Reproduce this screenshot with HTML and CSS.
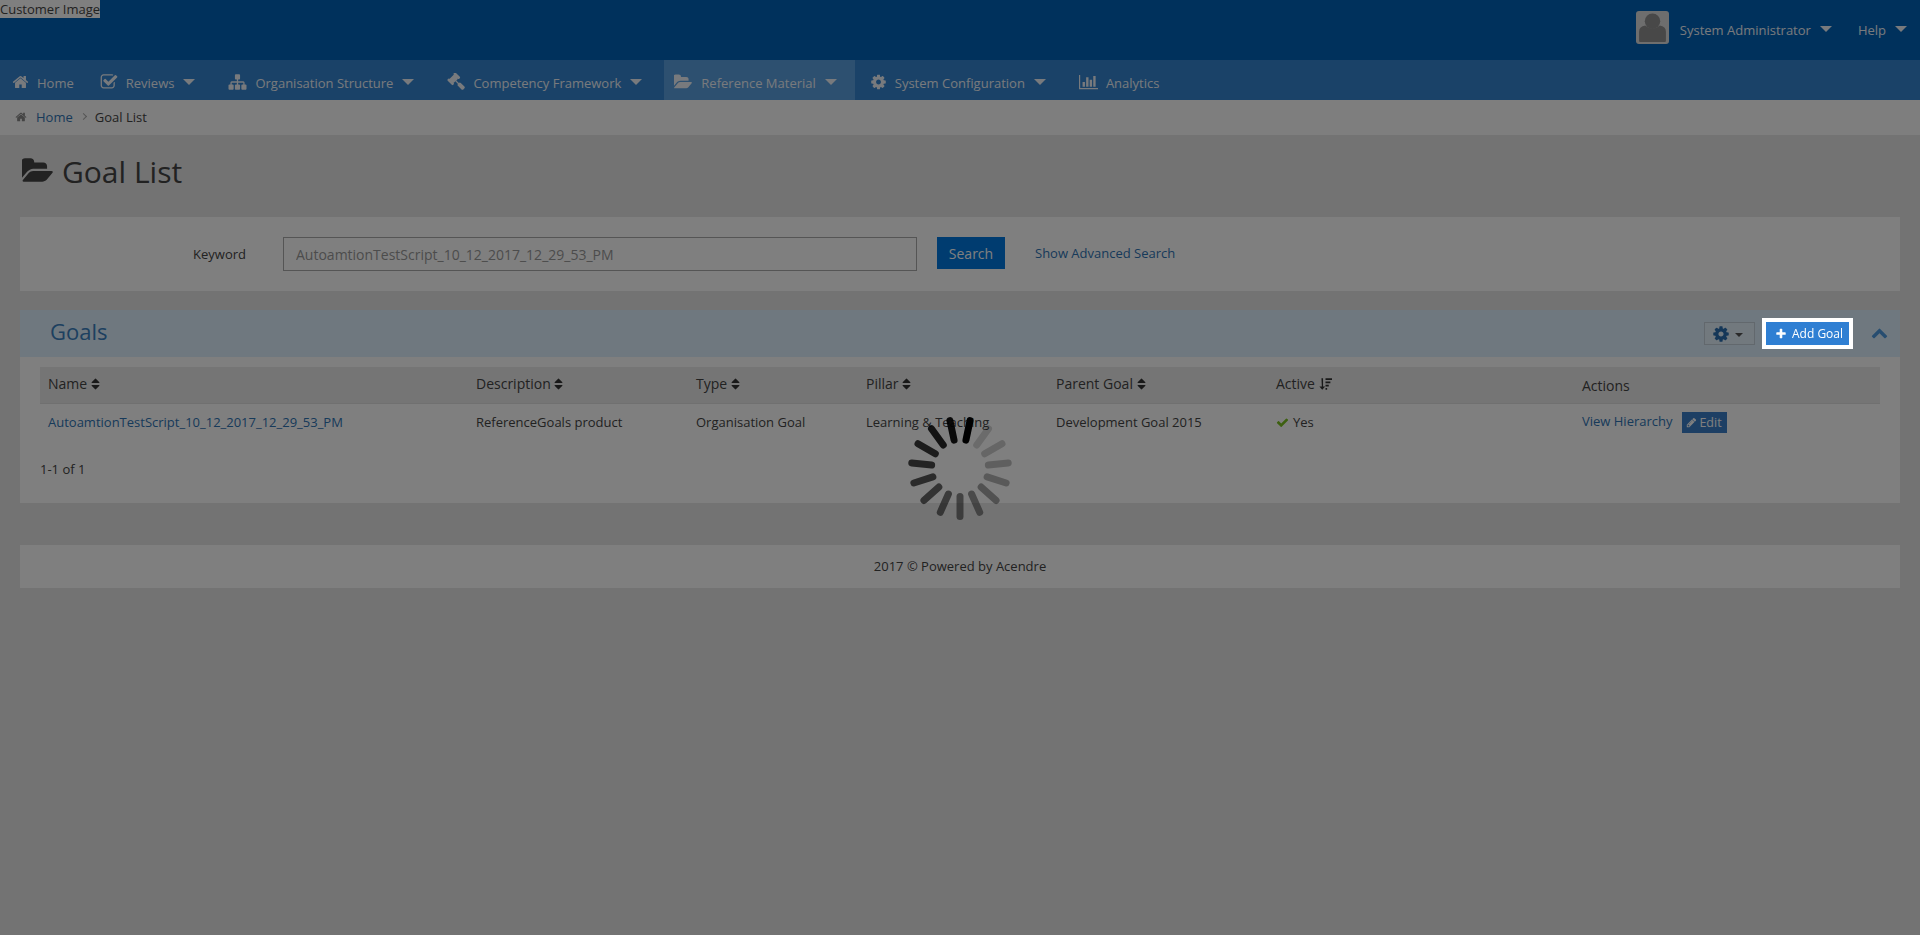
FILE: index.html
```html
<!DOCTYPE html>
<html lang="en">
<head>
  <meta charset="UTF-8" />
  <meta name="viewport" content="width=device-width, initial-scale=1.0" />
  <title>Goal List</title>
  <link rel="stylesheet" href="styles.css">
</head>
<body>
  <svg class="sprite" aria-hidden="true">
    <symbol id="i-home" viewBox="0 0 1792 1792"><path d="M1472 992v480q0 26-19 45t-45 19h-384v-384h-256v384h-384q-26 0-45-19t-19-45v-480q0-1 .5-3t.5-3l575-474 575 474q1 2 1 6zm223-69l-62 74q-8 9-21 11h-3q-13 0-21-7l-692-577-692 577q-12 8-24 7-13-2-21-11l-62-74q-8-10-7-23.5t11-21.5l719-599q32-26 76-26t76 26l244 204v-195q0-14 9-23t23-9h192q14 0 23 9t9 23v408l219 182q10 8 11 21.5t-7 23.5z"/></symbol>
    <symbol id="i-check-square" viewBox="0 0 1792 1792"><path d="M1472 930v318q0 119-84.500 203.500t-203.500 84.500h-832q-119 0-203.500-84.500t-84.500-203.500v-832q0-119 84.500-203.500t203.500-84.500h832q63 0 117 25 15 7 18 23 3 17-9 29l-49 49q-10 10-23 10-3 0-9-2-23-6-45-6h-832q-66 0-113 47t-47 113v832q0 66 47 113t113 47h832q66 0 113-47t47-113v-254q0-13 9-22l64-64q10-10 23-10 6 0 12 3 20 8 20 29zm231-489l-814 814q-24 24-57 24t-57-24l-430-430q-24-24-24-57t24-57l110-110q24-24 57-24t57 24l263 263 647-647q24-24 57-24t57 24l110 110q24 24 24 57t-24 57z"/></symbol>
    <symbol id="i-sitemap" viewBox="0 0 1792 1792"><path d="M1792 1248v320q0 40-28 68t-68 28h-320q-40 0-68-28t-28-68v-320q0-40 28-68t68-28h96v-192h-512v192h96q40 0 68 28t28 68v320q0 40-28 68t-68 28h-320q-40 0-68-28t-28-68v-320q0-40 28-68t68-28h96v-192h-512v192h96q40 0 68 28t28 68v320q0 40-28 68t-68 28h-320q-40 0-68-28t-28-68v-320q0-40 28-68t68-28h96v-192q0-52 38-90t90-38h512v-192h-96q-40 0-68-28t-28-68v-320q0-40 28-68t68-28h320q40 0 68 28t28 68v320q0 40-28 68t-68 28h-96v192h512q52 0 90 38t38 90v192h96q40 0 68 28t28 68z"/></symbol>
    <symbol id="i-gavel" viewBox="0 0 1792 1792"><path d="M1771 1440q0 53-37 90l-107 108q-39 37-91 37-53 0-90-37l-363-364q-38-36-38-90 0-53 43-96l-256-256-126 126q-14 14-34 14t-34-14q2 2 12.500 12t12.500 13 10 11.500 10 13.500 6 13.500 5.500 16.500 1.500 18q0 38-28 68-3 3-16.500 18t-19 20.500-18.500 16.500-22 15.500-22 9-26 4.500q-40 0-68-28l-408-408q-28-28-28-68 0-13 4.500-26t9-22 15.500-22 16.500-18.500 20.500-19 18-16.500q30-28 68-28 10 0 18 1.500t16.500 5.500 13.500 6 13.500 10 11.500 10 13 12.500 12 12.500q-14-14-14-34t14-34l348-348q14-14 34-14t34 14q-2-2-12.500-12t-12.500-13-10-11.500-10-13.500-6-13.500-5.500-16.500-1.500-18q0-38 28-68 3-3 16.500-18t19-20.500 18.500-16.500 22-15.500 22-9 26-4.500q40 0 68 28l408 408q28 28 28 68 0 13-4.500 26t-9 22-15.500 22-16.500 18.500-20.500 19-18 16.500q-30 28-68 28-10 0-18-1.500t-16.500-5.500-13.500-6-13.500-10-11.500-10-13-12.500-12-12.500q14 14 14 34t-14 34l-126 126 256 256q43-43 96-43 52 0 91 37l363 363q37 39 37 91z"/></symbol>
    <symbol id="i-folder" viewBox="0 0 1920 1792"><path d="M1815 952q0 31-31 66l-336 396q-43 51-120.500 86.500t-143.500 35.500h-1088q-34 0-60.500-13t-26.500-43q0-31 31-66l336-396q43-51 120.500-86.500t143.500-35.500h1088q34 0 60.500 13t26.500 43zm-343-344v160h-832q-94 0-197 47.500t-164 119.500l-337 396-5 6q0-4-.5-12.500t-.5-12.500v-960q0-92 66-158t158-66h320q92 0 158 66t66 158v32h544q92 0 158 66t66 158z"/></symbol>
    <symbol id="i-cog" viewBox="0 0 1792 1792"><path d="M1152 896q0-106-75-181t-181-75-181 75-75 181 75 181 181 75 181-75 75-181zm512-109v222q0 12-8 23t-20 13l-185 28q-19 54-39 91 35 50 107 138 10 12 10 25t-9 23q-27 37-99 108t-94 71q-12 0-26-9l-138-108q-44 23-91 38-16 136-29 186-7 28-36 28h-222q-14 0-24.500-8.500t-11.500-21.500l-28-184q-49-16-90-37l-141 107q-10 9-25 9-14 0-25-11-126-114-165-168-7-10-7-23 0-12 8-23 15-21 51-66.500t54-70.500q-27-50-41-99l-183-27q-13-2-21-12.500t-8-23.500v-222q0-12 8-23t19-13l186-28q14-46 39-92-40-57-107-138-10-12-10-24 0-10 9-23 26-36 98.500-107.500t94.500-71.500q13 0 26 10l138 107q44-23 91-38 16-136 29-186 7-28 36-28h222q14 0 24.500 8.500t11.500 21.500l28 184q49 16 90 37l142-107q9-9 24-9 13 0 25 10 129 119 165 170 7 8 7 22 0 12-8 23-15 21-51 66.500t-54 70.500q26 50 41 98l183 28q13 2 21 12.500t8 23.500z"/></symbol>
    <symbol id="i-chart" viewBox="0 0 2048 1792"><path d="M640 896v512h-256v-512h256zm384-512v1024h-256v-1024h256zm1024 1152v128h-2048v-1536h128v1408h1920zm-640-896v768h-256v-768h256zm384-384v1152h-256v-1152h256z"/></symbol>
    <symbol id="i-sort" viewBox="320 128 1152 1536"><path d="M1408 1088q0 26-19 45l-448 448q-19 19-45 19t-45-19l-448-448q-19-19-19-45t19-45 45-19h896q26 0 45 19t19 45zm0-384q0 26-19 45t-45 19h-896q-26 0-45-19t-19-45 19-45l448-448q19-19 45-19t45 19l448 448q19 19 19 45z"/></symbol>
    <symbol id="i-sort-amount" viewBox="0 0 16 16"><path d="M3 1h2v10h2.500l-3.500 4-3.500-4h3zM8 1h8v2h-8zM8 5h6v2h-6zM8 9h4v2h-4zM8 13h2v2h-2z"/></symbol>
    <symbol id="i-check" viewBox="0 0 1792 1792"><path d="M1671 566q0 40-28 68l-724 724-136 136q-28 28-68 28t-68-28l-136-136-362-362q-28-28-28-68t28-68l136-136q28-28 68-28t68 28l294 295 656-657q28-28 68-28t68 28l136 136q28 28 28 68z"/></symbol>
    <symbol id="i-pencil" viewBox="0 0 1792 1792"><path d="M491 1536l91-91-235-235-91 91v107h128v128h107zm523-928q0-22-22-22-10 0-17 7l-542 542q-7 7-7 17 0 22 22 22 10 0 17-7l542-542q7-7 7-17zm-54-192l416 416-832 832h-416v-416zm683 96q0 53-37 90l-166 166-416-416 166-165q36-38 90-38 53 0 91 38l235 234q37 39 37 91z"/></symbol>
    <symbol id="i-plus" viewBox="0 0 1792 1792"><path d="M1600 736v192q0 40-28 68t-68 28h-416v416q0 40-28 68t-68 28h-192q-40 0-68-28t-28-68v-416h-416q-40 0-68-28t-28-68v-192q0-40 28-68t68-28h416v-416q0-40 28-68t68-28h192q40 0 68 28t28 68v416h416q40 0 68 28t28 68z"/></symbol>
    <symbol id="i-chevron-up" viewBox="0 0 1792 1792"><path d="M1683 1331l-166 165q-19 19-45 19t-45-19l-531-531-531 531q-19 19-45 19t-45-19l-166-165q-19-19-19-45.500t19-45.500l742-741q19-19 45-19t45 19l742 741q19 19 19 45.500t-19 45.500z"/></symbol>
  </svg>

  <header class="topbar">
    <span class="customer-image">Customer Image</span>
    <div class="usermenu">
      <span class="avatar">
        <svg viewBox="0 0 32 32"><circle cx="16" cy="10" r="7.500"/><path d="M3 29v-9q0-5 6-6 3 3 7 3t7-3q6 1 6 6v9q0 1-1 1h-24q-1 0-1-1z"/></svg>
      </span>
      <span class="usermenu-item">System Administrator<i class="caret"></i></span>
      <span class="usermenu-item">Help<i class="caret"></i></span>
    </div>
  </header>

  <nav class="mainnav">
    <a class="nav-item"><svg class="nav-icon w16"><use href="#i-home"/></svg>Home</a>
    <a class="nav-item"><svg class="nav-icon w18"><use href="#i-check-square"/></svg>Reviews<i class="caret"></i></a>
    <a class="nav-item"><svg class="nav-icon w19"><use href="#i-sitemap"/></svg>Organisation Structure<i class="caret"></i></a>
    <a class="nav-item"><svg class="nav-icon w18"><use href="#i-gavel"/></svg>Competency Framework<i class="caret"></i></a>
    <a class="nav-item active"><svg class="nav-icon w19"><use href="#i-folder"/></svg>Reference Material<i class="caret"></i></a>
    <a class="nav-item"><svg class="nav-icon w17"><use href="#i-cog"/></svg>System Configuration<i class="caret"></i></a>
    <a class="nav-item"><svg class="nav-icon w19"><use href="#i-chart"/></svg>Analytics</a>
  </nav>

  <div class="breadcrumb">
    <svg class="crumb-icon"><use href="#i-home"/></svg>
    <a class="link">Home</a>
    <span class="crumb-sep"></span>
    <span>Goal List</span>
  </div>

  <main class="page">
    <h1 class="page-title"><svg class="title-icon"><use href="#i-folder"/></svg>Goal List</h1>

    <section class="panel search-panel">
      <label class="search-label" for="keyword">Keyword</label>
      <input class="search-input" id="keyword" type="text" value="AutoamtionTestScript_10_12_2017_12_29_53_PM">
      <button class="search-btn">Search</button>
      <a class="link advanced">Show Advanced Search</a>
    </section>

    <section class="panel goals-panel">
      <div class="goals-head">
        <h2>Goals</h2>
        <div class="goals-tools">
          <button class="gear-btn"><svg class="gear-icon"><use href="#i-cog"/></svg><i class="mini-caret"></i></button>
          <button class="add-btn"><svg class="plus-icon"><use href="#i-plus"/></svg>Add Goal</button>
          <svg class="collapse-icon"><use href="#i-chevron-up"/></svg>
        </div>
      </div>
      <div class="goals-body">
        <table class="goals-table">
          <colgroup>
            <col class="c-name"><col class="c-desc"><col class="c-type"><col class="c-pillar"><col class="c-parent"><col class="c-active"><col class="c-actions">
          </colgroup>
          <thead>
            <tr>
              <th>Name <svg class="sort-icon"><use href="#i-sort"/></svg></th>
              <th>Description <svg class="sort-icon"><use href="#i-sort"/></svg></th>
              <th>Type <svg class="sort-icon"><use href="#i-sort"/></svg></th>
              <th>Pillar <svg class="sort-icon"><use href="#i-sort"/></svg></th>
              <th>Parent Goal <svg class="sort-icon"><use href="#i-sort"/></svg></th>
              <th>Active <svg class="sort-amount"><use href="#i-sort-amount"/></svg></th>
              <th class="th-actions">Actions</th>
            </tr>
          </thead>
          <tbody>
            <tr>
              <td><a class="link">AutoamtionTestScript_10_12_2017_12_29_53_PM</a></td>
              <td>ReferenceGoals product</td>
              <td>Organisation Goal</td>
              <td>Learning &amp; Teaching</td>
              <td>Development Goal 2015</td>
              <td><svg class="yes-icon"><use href="#i-check"/></svg>Yes</td>
              <td><a class="link">View Hierarchy</a><button class="edit-btn"><svg class="edit-icon"><use href="#i-pencil"/></svg>Edit</button></td>
            </tr>
          </tbody>
        </table>
        <div class="pager">1-1 of 1</div>
      </div>
    </section>

    <footer class="panel footer">2017 © Powered by Acendre</footer>
  </main>

  <div class="overlay"></div>

  <svg class="spinner" viewBox="-55 -55 110 110" aria-hidden="true">
    <rect x="-3.500" y="-52" width="7" height="27" rx="3.500" transform="rotate(12)" fill-opacity="1"/>
    <rect x="-3.500" y="-52" width="7" height="27" rx="3.500" transform="rotate(348)" fill-opacity=".92"/>
    <rect x="-3.500" y="-52" width="7" height="27" rx="3.500" transform="rotate(324)" fill-opacity=".85"/>
    <rect x="-3.500" y="-52" width="7" height="27" rx="3.500" transform="rotate(300)" fill-opacity=".78"/>
    <rect x="-3.500" y="-52" width="7" height="27" rx="3.500" transform="rotate(276)" fill-opacity=".72"/>
    <rect x="-3.500" y="-52" width="7" height="27" rx="3.500" transform="rotate(252)" fill-opacity=".66"/>
    <rect x="-3.500" y="-52" width="7" height="27" rx="3.500" transform="rotate(228)" fill-opacity=".6"/>
    <rect x="-3.500" y="-52" width="7" height="27" rx="3.500" transform="rotate(204)" fill-opacity=".54"/>
    <rect x="-3.500" y="-52" width="7" height="27" rx="3.500" transform="rotate(180)" fill-opacity=".48"/>
    <rect x="-3.500" y="-52" width="7" height="27" rx="3.500" transform="rotate(156)" fill-opacity=".42"/>
    <rect x="-3.500" y="-52" width="7" height="27" rx="3.500" transform="rotate(132)" fill-opacity=".36"/>
    <rect x="-3.500" y="-52" width="7" height="27" rx="3.500" transform="rotate(108)" fill-opacity=".3"/>
    <rect x="-3.500" y="-52" width="7" height="27" rx="3.500" transform="rotate(84)" fill-opacity=".25"/>
    <rect x="-3.500" y="-52" width="7" height="27" rx="3.500" transform="rotate(60)" fill-opacity=".2"/>
    <rect x="-3.500" y="-52" width="7" height="27" rx="3.500" transform="rotate(36)" fill-opacity=".16"/>
  </svg>
</body>
</html>
```

FILE: styles.css
```css
* {
  box-sizing: border-box;
}
html, body {
  height: 100%;
}
body {
  margin: 0;
  font-family: "Open Sans", sans-serif;
  font-size: 13px;
  color: #444;
  background: #e6e6e6;
  overflow: hidden;
}
.sprite {
  display: none;
}
svg {
  fill: currentColor;
}
.link {
  color: #2f74b4;
}

/* top bar */
.topbar {
  height: 60px;
  background: #0062b8;
  display: flex;
  justify-content: space-between;
  align-items: flex-start;
  color: #fff;
}
.customer-image {
  background: #fff;
  color: #444;
  height: 18px;
  line-height: 18px;
  width: 100px;
  white-space: nowrap;
}
.usermenu {
  display: flex;
  align-items: center;
  height: 60px;
  padding-right: 13px;
  font-size: 13px;
}
.avatar {
  width: 33px;
  height: 33px;
  margin-top: -6px;
  background: #ddd;
  border-radius: 3px;
  color: #909090;
  margin-right: 11px;
}
.avatar svg {
  display: block;
  width: 33px;
  height: 33px;
}
.usermenu-item {
  display: flex;
  align-items: center;
  margin-right: 26px;
  margin-top: -1px;
  color: #f0f4fa;
}
.usermenu-item:last-child {
  margin-right: 0;
}
.caret {
  display: inline-block;
  width: 0;
  height: 0;
  margin-left: 9px;
  border-left: 6px solid transparent;
  border-right: 6px solid transparent;
  border-top: 6px solid currentColor;
  margin-top: -2px;
}

/* main navigation */
.mainnav {
  height: 40px;
  background: #3484d0;
  display: flex;
  color: #f0f4fa;
  font-size: 13px;
}
.nav-item {
  display: flex;
  align-items: center;
  height: 40px;
  padding: 6px 18px 0 15px;
}
.nav-item:first-child {
  padding-left: 12px;
  padding-right: 11px;
}
.nav-item.active {
  background: #5aa0e0;
  padding-left: 10px;
  margin-left: 4px;
}
.nav-icon {
  height: 18px;
  margin-right: 8px;
  margin-top: -3px;
}
.w16 { width: 17px; }
.w17 { width: 17px; }
.w18 { width: 18px; }
.w19 { width: 19px; }

/* breadcrumb */
.breadcrumb {
  height: 35px;
  background: #fcfcfc;
  display: flex;
  align-items: center;
  padding: 0 0 2px 15px;
}
.crumb-icon {
  width: 12px;
  height: 12px;
  color: #888;
  margin-right: 9px;
}
.crumb-sep {
  width: 5px;
  height: 5px;
  margin: 0 9px 0 8px;
  border-top: 1px solid #aaa;
  border-right: 1px solid #aaa;
  transform: rotate(45deg);
}

/* page */
.page {
  padding: 0 20px;
}
.page-title {
  display: flex;
  align-items: center;
  height: 82px;
  margin: 0;
  padding: 0 0 10px 2px;
  font-size: 30px;
  font-weight: 400;
  color: #444;
}
.title-icon {
  width: 33px;
  height: 30px;
  margin-right: 7px;
}
.panel {
  background: #fff;
}
.search-panel {
  height: 74px;
  display: flex;
  align-items: flex-start;
  padding-top: 20px;
  margin-bottom: 19px;
}
.search-label {
  width: 226px;
  text-align: right;
  line-height: 34px;
}
.search-input {
  width: 634px;
  height: 34px;
  margin-left: 37px;
  padding: 1px 12px 0;
  border: 1px solid #aaa;
  background: #fff;
  font-family: inherit;
  font-size: 14px;
  color: #999;
}
.search-btn {
  width: 68px;
  height: 32px;
  margin-left: 20px;
  border: 0;
  background: #0078e0;
  color: #fff;
  font-family: inherit;
  font-size: 14px;
}
.advanced {
  margin-left: 30px;
  line-height: 32px;
}

/* goals panel */
.goals-panel {
  height: 193px;
  margin-bottom: 42px;
}
.goals-head {
  height: 47px;
  background: #dff1ff;
  display: flex;
  justify-content: space-between;
  align-items: center;
  padding: 0 12px 0 30px;
}
.goals-head h2 {
  margin: 0 0 6px;
  font-size: 22px;
  font-weight: 400;
  color: #3a80c0;
}
.goals-tools {
  display: flex;
  align-items: center;
}
.gear-btn {
  display: flex;
  align-items: center;
  justify-content: center;
  width: 51px;
  height: 23px;
  padding: 0 4px 0 0;
  border: 1px solid #c4d0da;
  background: #e4f2fc;
  color: #2a6eb0;
}
.gear-icon {
  width: 18px;
  height: 18px;
}
.mini-caret {
  width: 0;
  height: 0;
  margin: 3px 0 0 5px;
  border-left: 4px solid transparent;
  border-right: 4px solid transparent;
  border-top: 4px solid #555;
}
.add-btn {
  position: relative;
  z-index: 20;
  display: flex;
  align-items: center;
  width: 83px;
  height: 23px;
  margin-left: 11px;
  padding: 0 0 0 9px;
  border: 0;
  outline: 4px solid #fff;
  background: #2f7fd3;
  color: #fff;
  font-family: inherit;
  font-size: 12px;
  white-space: nowrap;
}
.plus-icon {
  width: 12px;
  height: 12px;
  margin-right: 5px;
  flex: none;
}
.collapse-icon {
  width: 17px;
  height: 17px;
  margin: -3px 0 0 22px;
  color: #4f9be0;
}
.goals-body {
  padding: 10px 20px 0;
}
.goals-table {
  width: 100%;
  border-collapse: collapse;
  table-layout: fixed;
}
.c-name { width: 428px; }
.c-desc { width: 220px; }
.c-type { width: 170px; }
.c-pillar { width: 190px; }
.c-parent { width: 220px; }
.c-active { width: 306px; }
.c-actions { width: 306px; }
.goals-table th {
  height: 36px;
  padding: 0 8px 2px;
  background: #eaeaea;
  border-bottom: 1px solid #e0e0e0;
  text-align: left;
  font-size: 14px;
  font-weight: 400;
}
.goals-table .th-actions {
  padding-top: 3px;
}
.goals-table td {
  height: 36px;
  padding: 2px 8px 0;
}
.sort-icon {
  width: 9px;
  height: 14px;
  vertical-align: -2px;
  color: #333;
}
.sort-amount {
  width: 13px;
  height: 14px;
  vertical-align: -2px;
  color: #333;
}
.yes-icon {
  width: 13px;
  height: 13px;
  margin-right: 4px;
  vertical-align: -2px;
  color: #7ac020;
}
.edit-btn {
  height: 21px;
  width: 45px;
  margin-left: 9px;
  padding: 0;
  border: 0;
  background: #3a7ec8;
  color: #fff;
  font-family: inherit;
  font-size: 12.500px;
  vertical-align: -1px;
}
.edit-icon {
  width: 11px;
  height: 11px;
  margin-right: 2px;
  vertical-align: -1px;
}
.pager {
  margin-top: 21px;
}

/* footer */
.footer {
  height: 43px;
  line-height: 43px;
  text-align: center;
}

/* loading layer */
.overlay {
  position: fixed;
  top: 0;
  right: 0;
  bottom: 0;
  left: 0;
  z-index: 10;
  background: rgba(0, 0, 0, 0.5);
}
.spinner {
  position: fixed;
  top: 413px;
  left: 905px;
  z-index: 30;
  width: 110px;
  height: 110px;
  fill: #000;
}
```
